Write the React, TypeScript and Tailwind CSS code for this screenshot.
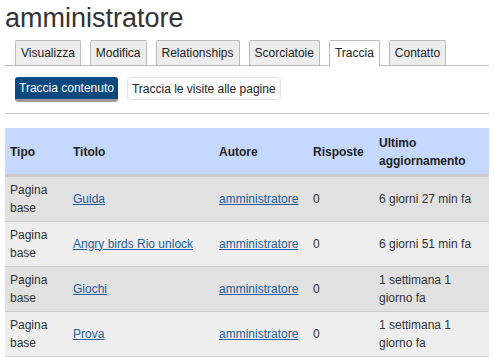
import React from "react";

const tabs = ["Visualizza", "Modifica", "Relationships", "Scorciatoie", "Traccia", "Contatto"];

const rows = [
  { title: "Guida", time: "6 giorni 27 min fa" },
  { title: "Angry birds Rio unlock", time: "6 giorni 51 min fa" },
  { title: "Giochi", time: "1 settimana 1 giorno fa" },
  { title: "Prova", time: "1 settimana 1 giorno fa" },
];

export default function App() {
  return (
    <div
      className="w-[494px] h-[357px] overflow-hidden bg-white px-[5px] text-[#333] text-[12px] leading-[18px]"
      style={{ fontFamily: '"Liberation Sans", Arial, sans-serif' }}
    >
      <h1 className="pt-[3px] text-[27px] leading-[30px] font-normal text-[#333]">amministratore</h1>

      <div className="mt-[7px] flex gap-[9px] pl-[10px] border-b border-[#bbb]">
        {tabs.map((t) =>
          t === "Traccia" ? (
            <div
              key={t}
              className="border border-b-0 border-[#bbb] bg-white px-[5px] pt-[3px] pb-[4px] -mb-px text-[#222] rounded-t-[2px]"
            >
              {t}
            </div>
          ) : (
            <div
              key={t}
              className="border border-b-0 border-[#bbb] bg-[#ededed] px-[5px] pt-[3px] pb-[3px] text-[#222] rounded-t-[2px]"
            >
              {t}
            </div>
          )
        )}
      </div>

      <div className="flex items-start gap-[9px] pl-[10px] pt-[11px] pb-[11px] border-b border-[#c4c4c4]">
        <div className="bg-[#0b4a7f] text-white px-[4px] pt-[2px] pb-[2px] rounded-[3px] border-b-[3px] border-[#9a9a9a]">
          Traccia contenuto
        </div>
        <div className="bg-white border border-[#e4e4e4] px-[4px] pt-[2px] pb-[1px] rounded-[4px] text-[#222]">
          Traccia le visite alle pagine
        </div>
      </div>

      <table className="mt-[14px] w-[484px] table-fixed border-collapse">
        <colgroup>
          <col className="w-[63px]" />
          <col className="w-[146px]" />
          <col className="w-[94px]" />
          <col className="w-[66px]" />
          <col className="w-[115px]" />
        </colgroup>
        <thead>
          <tr className="h-[47px] bg-[#c5d9ff] border-b-[3px] border-[#ccc]">
            <th className="text-left font-bold px-[5px] pt-[2px] pb-0 align-middle text-[#222]">Tipo</th>
            <th className="text-left font-bold px-[5px] pt-[2px] pb-0 align-middle text-[#222]">Titolo</th>
            <th className="text-left font-bold px-[5px] pt-[2px] pb-0 align-middle text-[#222]">Autore</th>
            <th className="text-left font-bold px-[5px] pt-[2px] pb-0 align-middle text-[#222]">Risposte</th>
            <th className="text-left font-bold px-[5px] pt-[2px] pb-0 align-middle text-[#222]">Ultimo aggiornamento</th>
          </tr>
        </thead>
        <tbody>
          {rows.map((r, i) => (
            <tr
              key={r.title}
              className={(i % 2 === 0 ? "bg-[#e1e1e1]" : "bg-[#eeeeee]") + " border-b border-[#ccc]"}
            >
              <td className="px-[5px] pt-[4px] pb-[4px] align-middle">Pagina base</td>
              <td className="px-[5px] pt-[4px] pb-[4px] align-middle">
                <a href="#" className="text-[#225e9b] underline">{r.title}</a>
              </td>
              <td className="px-[5px] pt-[4px] pb-[4px] align-middle">
                <a href="#" className="text-[#225e9b] underline">amministratore</a>
              </td>
              <td className="px-[5px] pt-[4px] pb-[4px] align-middle">0</td>
              <td className="px-[5px] pt-[4px] pb-[4px] align-middle">{r.time}</td>
            </tr>
          ))}
        </tbody>
      </table>
    </div>
  );
}
